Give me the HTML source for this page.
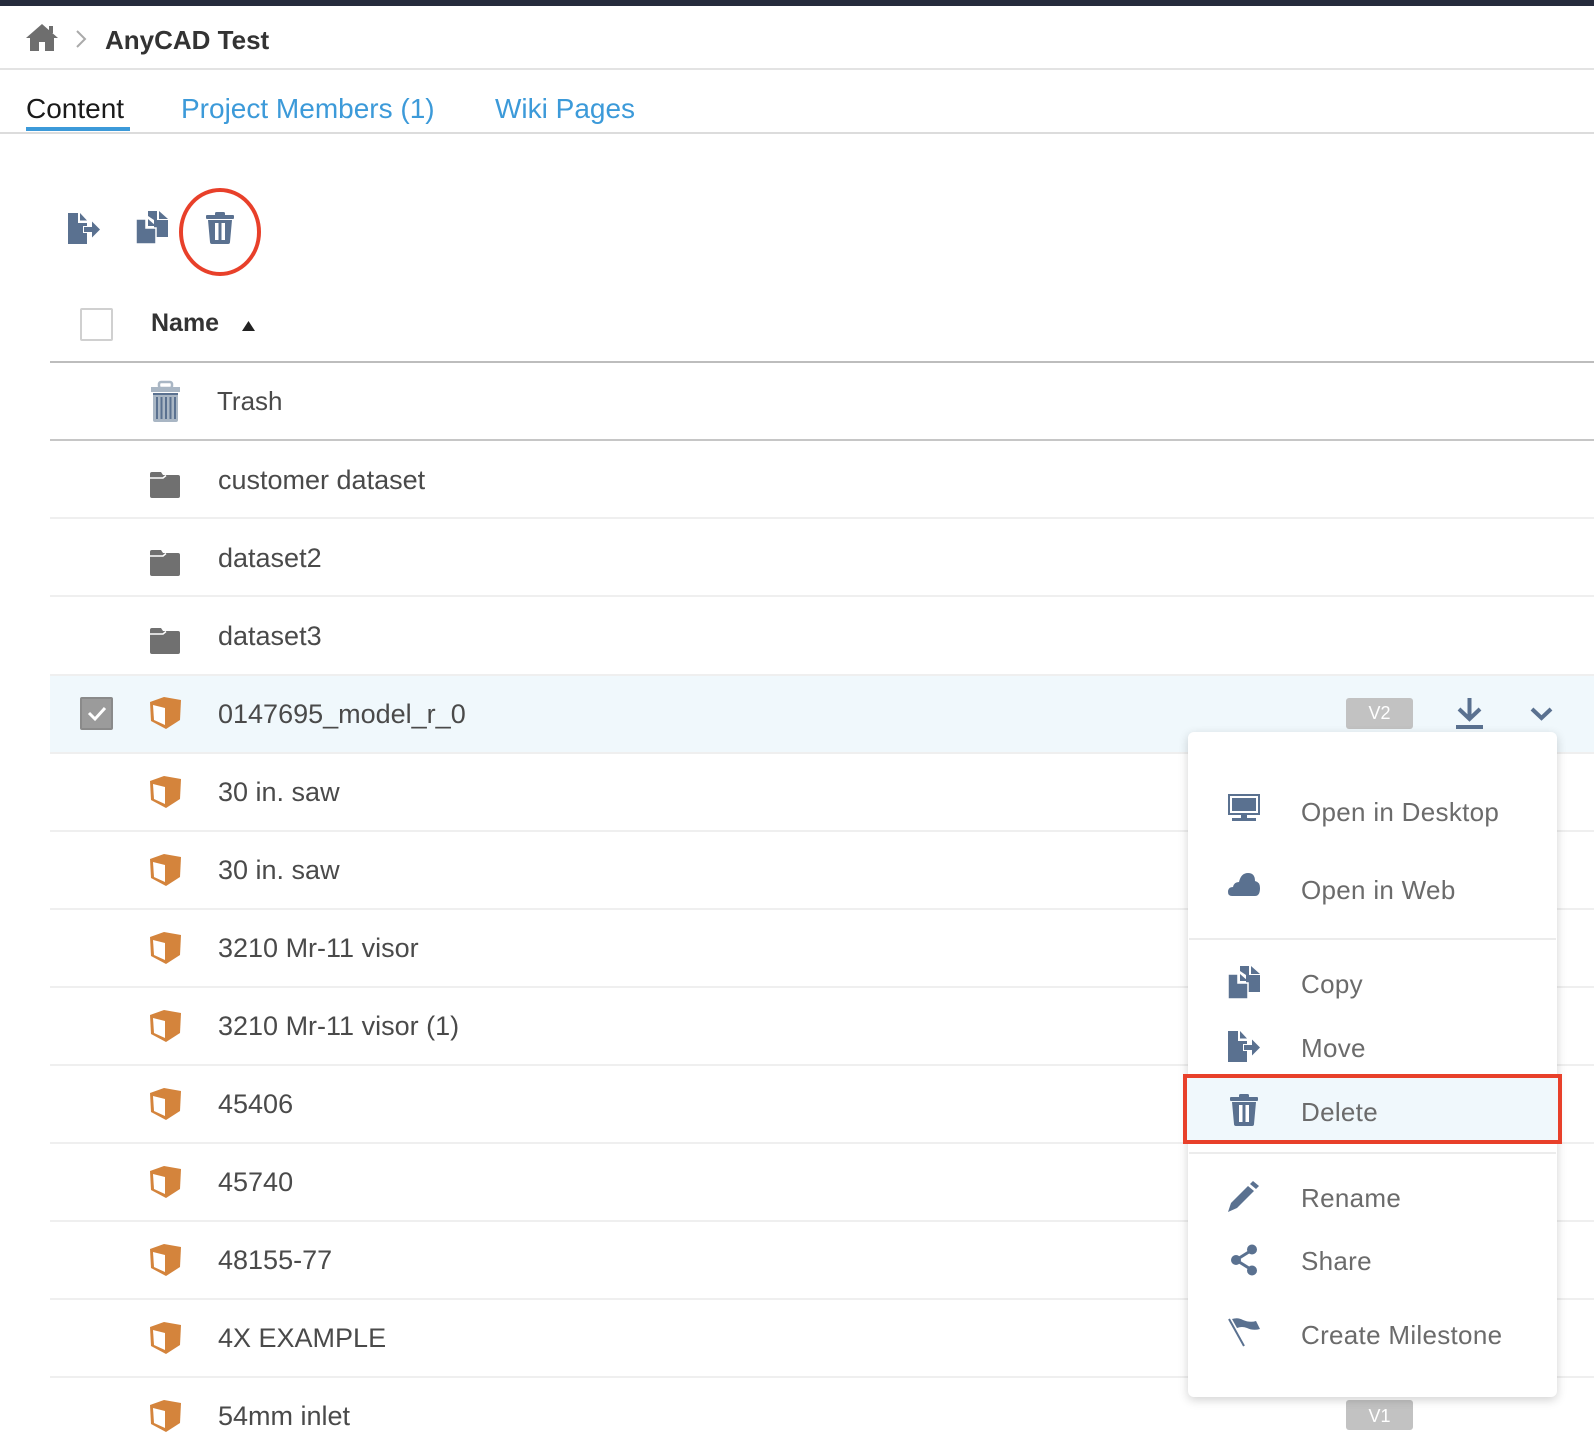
<!DOCTYPE html>
<html><head><meta charset="utf-8">
<style>
*{margin:0;padding:0;box-sizing:border-box}
body{width:1594px;height:1430px;overflow:hidden;background:#fff;position:relative;font-family:"Liberation Sans",sans-serif;color:#4a4a4a}
.a{position:absolute}
.t{position:absolute;white-space:nowrap;line-height:1}
.hl{position:absolute;left:50px;right:0;height:2px;background:#efefef}
.row{position:absolute;left:218px;font-size:27px;color:#4a4a4a;white-space:nowrap;line-height:1}
.mi{position:absolute;left:1301px;font-size:26px;color:#6b6b6b;white-space:nowrap;line-height:1;letter-spacing:0.3px}
svg.a{overflow:visible}
</style></head><body>
<svg width="0" height="0" style="position:absolute">
<defs>
<symbol id="cube" viewBox="0 0 32 32"><polygon points="0,5 14,0 31,3 30,23 16,32 1,24" fill="#d4843c"/><polygon points="3,8 15,11 15,28 4,23" fill="#fff"/></symbol>
<symbol id="folder" viewBox="0 0 30 26"><path d="M0 2 Q0 0 2 0 H11 L13 3 H28 Q30 3 30 5 V24 Q30 26 28 26 H2 Q0 26 0 24 Z" fill="#707070"/><path d="M0 6 H13 L16 3.5" stroke="#fff" stroke-width="1.5" fill="none"/></symbol>
<symbol id="move" viewBox="0 0 32 32"><path d="M0 0 H10 V10 H19 V13 H15 V20 H19 V31 H0 Z" fill="#5a7190"/><path d="M12 0 L19 7.5 H12 Z" fill="#5a7190"/><rect x="16" y="14" width="10" height="5" fill="#5a7190"/><polygon points="24,8.5 32,16.5 24,24.5" fill="#5a7190"/></symbol>
<symbol id="copy" viewBox="0 0 32 33"><path d="M12 0 H21 V9 H32 V26 H18 V9 L12 5 Z" fill="#5a7190"/><path d="M23 0 L32 8 H23 Z" fill="#5a7190"/><path d="M0 8 H10 V17 H20 V33 H0 Z" fill="#5a7190" stroke="#fff" stroke-width="1.5"/><path d="M12 8 L20 15 H12 Z" fill="#5a7190"/></symbol>
<symbol id="trash" viewBox="0 0 28 32"><rect x="9" y="0" width="10" height="4" rx="1.5" fill="#5a7190"/><rect x="0" y="3" width="28" height="4" rx="1" fill="#5a7190"/><path d="M2 8 H26 L24 30 Q24 32 22 32 H6 Q4 32 4 30 Z" fill="#5a7190"/><rect x="9" y="11" width="3.5" height="17" fill="#fff"/><rect x="15.5" y="11" width="3.5" height="17" fill="#fff"/></symbol>
</defs></svg>

<div class="a" style="left:0;top:0;width:1594px;height:6px;background:#262b3c"></div>
<svg class="a" style="left:26px;top:24px" width="32" height="27" viewBox="0 0 32 27"><path d="M16 0 L32 14 H28 V27 H19 V18 H13 V27 H4 V14 H0 Z" fill="#6e6e6e"/><rect x="23" y="2" width="4" height="7" fill="#6e6e6e"/></svg>
<svg class="a" style="left:75px;top:29px" width="12" height="20" viewBox="0 0 12 20"><path d="M2 2 L10 10 L2 18" stroke="#aaa" stroke-width="2" fill="none"/></svg>
<div class="t" style="left:105px;top:27px;font-size:26px;font-weight:bold;color:#333">AnyCAD Test</div>
<div class="a" style="left:0;top:68px;width:1594px;height:2px;background:#e3e3e3"></div>

<div class="t" style="left:26px;top:95px;font-size:28px;color:#1a1a1a">Content</div>
<div class="t" style="left:181px;top:95px;font-size:28px;color:#3c9ad9">Project Members (1)</div>
<div class="t" style="left:495px;top:95px;font-size:28px;color:#3c9ad9">Wiki Pages</div>
<div class="a" style="left:26px;top:127px;width:104px;height:4px;background:#3c9ad9"></div>
<div class="a" style="left:0;top:132px;width:1594px;height:2px;background:#dcdcdc"></div>

<svg class="a" style="left:68px;top:213px" width="32" height="32"><use href="#move"/></svg>
<svg class="a" style="left:136px;top:211px" width="32" height="33"><use href="#copy"/></svg>
<svg class="a" style="left:206px;top:212px" width="28" height="32"><use href="#trash"/></svg>
<svg class="a" style="left:176px;top:186px" width="90" height="94"><ellipse cx="44" cy="46" rx="39" ry="42" fill="none" stroke="#e8402a" stroke-width="4"/></svg>

<div class="a" style="left:80px;top:308px;width:33px;height:33px;border:2px solid #d0d0d0;border-radius:2px"></div>
<div class="t" style="left:151px;top:311px;font-size:25px;font-weight:bold;color:#333">Name</div>
<svg class="a" style="left:242px;top:321px" width="13" height="10"><polygon points="6.5,0 13,10 0,10" fill="#222"/></svg>
<div class="a" style="left:50px;top:361px;right:0;height:2px;background:#bdbdbd"></div>

<svg class="a" style="left:151px;top:382px" width="29" height="40" viewBox="0 0 29 40"><rect x="8" y="0" width="13" height="6" rx="2" fill="none" stroke="#a9b6c4" stroke-width="2.5"/><rect x="0" y="5" width="29" height="5" fill="#a9b6c4"/><rect x="2" y="11" width="25" height="29" rx="2" fill="#a9b6c4"/><rect x="2" y="11" width="25" height="2" fill="#5a7190"/><g fill="#5a7190"><rect x="5" y="15" width="2" height="22"/><rect x="9.5" y="15" width="2" height="22"/><rect x="14" y="15" width="2" height="22"/><rect x="18.5" y="15" width="2" height="22"/><rect x="23" y="15" width="2" height="22"/></g></svg>
<div class="row" style="left:217px;top:388px;font-size:26px">Trash</div>
<div class="a" style="left:50px;top:439px;right:0;height:2px;background:#c6c6c6"></div>

<div class="a" style="left:50px;top:676px;right:0;height:77px;background:#f0f8fc"></div>

<div class="hl" style="top:517px"></div>
<div class="hl" style="top:595px"></div>
<div class="hl" style="top:674px"></div>
<div class="hl" style="top:752px"></div>
<div class="hl" style="top:830px"></div>
<div class="hl" style="top:908px"></div>
<div class="hl" style="top:986px"></div>
<div class="hl" style="top:1064px"></div>
<div class="hl" style="top:1142px"></div>
<div class="hl" style="top:1220px"></div>
<div class="hl" style="top:1298px"></div>
<div class="hl" style="top:1376px"></div>

<svg class="a" style="left:150px;top:472px" width="30" height="26"><use href="#folder"/></svg>
<div class="row" style="top:467px">customer dataset</div>
<svg class="a" style="left:150px;top:550px" width="30" height="26"><use href="#folder"/></svg>
<div class="row" style="top:545px">dataset2</div>
<svg class="a" style="left:150px;top:628px" width="30" height="26"><use href="#folder"/></svg>
<div class="row" style="top:623px">dataset3</div>

<div class="a" style="left:80px;top:697px;width:33px;height:33px;background:#9b9b9b;border:2px solid #8a8a8a;border-radius:2px"></div>
<svg class="a" style="left:86px;top:703px" width="22" height="20"><path d="M3 10 L9 16 L19 5" stroke="#fff" stroke-width="3" fill="none"/></svg>

<svg class="a" style="left:150px;top:697px" width="32" height="32"><use href="#cube"/></svg>
<div class="row" style="top:701px">0147695_model_r_0</div>
<svg class="a" style="left:150px;top:776px" width="32" height="32"><use href="#cube"/></svg>
<div class="row" style="top:779px">30 in. saw</div>
<svg class="a" style="left:150px;top:854px" width="32" height="32"><use href="#cube"/></svg>
<div class="row" style="top:857px">30 in. saw</div>
<svg class="a" style="left:150px;top:932px" width="32" height="32"><use href="#cube"/></svg>
<div class="row" style="top:935px">3210 Mr-11 visor</div>
<svg class="a" style="left:150px;top:1010px" width="32" height="32"><use href="#cube"/></svg>
<div class="row" style="top:1013px">3210 Mr-11 visor (1)</div>
<svg class="a" style="left:150px;top:1088px" width="32" height="32"><use href="#cube"/></svg>
<div class="row" style="top:1091px">45406</div>
<svg class="a" style="left:150px;top:1166px" width="32" height="32"><use href="#cube"/></svg>
<div class="row" style="top:1169px">45740</div>
<svg class="a" style="left:150px;top:1244px" width="32" height="32"><use href="#cube"/></svg>
<div class="row" style="top:1247px">48155-77</div>
<svg class="a" style="left:150px;top:1322px" width="32" height="32"><use href="#cube"/></svg>
<div class="row" style="top:1325px">4X EXAMPLE</div>
<svg class="a" style="left:150px;top:1400px" width="32" height="32"><use href="#cube"/></svg>
<div class="row" style="top:1403px">54mm inlet</div>

<div class="a" style="left:1346px;top:698px;width:67px;height:31px;background:#c2c2c2;border-radius:3px;color:#fff;font-size:18px;text-align:center;line-height:31px">V2</div>
<svg class="a" style="left:1456px;top:698px" width="27" height="32" viewBox="0 0 27 32"><rect x="11.5" y="0" width="4" height="20" fill="#5a7190"/><path d="M3 11 L13.5 21 L24 11" stroke="#5a7190" stroke-width="4" fill="none"/><rect x="0" y="27" width="27" height="4" fill="#5a7190"/></svg>
<svg class="a" style="left:1530px;top:706px" width="23" height="15" viewBox="0 0 23 15"><path d="M2 3 L11.5 12 L21 3" stroke="#5a7190" stroke-width="4" fill="none"/></svg>
<div class="a" style="left:1346px;top:1400px;width:67px;height:30px;background:#c2c2c2;border-radius:3px;color:#fff;font-size:18px;text-align:center;line-height:32px">V1</div>

<div class="a" style="left:1188px;top:732px;width:369px;height:665px;background:#fff;border-radius:6px;box-shadow:0 3px 10px rgba(0,0,0,0.18)"></div>
<svg class="a" style="left:1228px;top:794px" width="32" height="28" viewBox="0 0 32 28"><rect x="1" y="1" width="30" height="19" fill="none" stroke="#5a7190" stroke-width="2"/><rect x="4" y="4" width="24" height="13" fill="#5a7190"/><rect x="13" y="20" width="6" height="4" fill="#5a7190"/><rect x="4" y="24" width="24" height="3" fill="#5a7190"/></svg>
<div class="mi" style="top:799px">Open in Desktop</div>
<svg class="a" style="left:1228px;top:873px" width="32" height="23" viewBox="0 0 32 23"><path d="M4 23 Q0 23 0 19 Q0 14 5 14 Q6 9 11 9 Q13 0 20 0 Q27 0 27 8 Q32 9 32 15 Q32 23 27 23 Z" fill="#5a7190"/></svg>
<div class="mi" style="top:877px">Open in Web</div>
<div class="a" style="left:1189px;top:938px;width:367px;height:2px;background:#ececec"></div>
<svg class="a" style="left:1228px;top:966px" width="32" height="33"><use href="#copy"/></svg>
<div class="mi" style="top:971px">Copy</div>
<svg class="a" style="left:1228px;top:1031px" width="32" height="32"><use href="#move"/></svg>
<div class="mi" style="top:1035px">Move</div>
<div class="a" style="left:1183px;top:1074px;width:379px;height:70px;background:#f0f8fc;border:4px solid #e8402a"></div>
<svg class="a" style="left:1230px;top:1094px" width="28" height="32"><use href="#trash"/></svg>
<div class="mi" style="top:1099px">Delete</div>
<div class="a" style="left:1189px;top:1152px;width:367px;height:2px;background:#ececec"></div>
<svg class="a" style="left:1228px;top:1180px" width="32" height="32" viewBox="0 0 32 32"><path d="M25 1 L31 6 L28 9 L22 4 Z" fill="#5a7190"/><path d="M20 6 L26 11 L9 28 L0 32 L3 23 Z" fill="#5a7190"/></svg>
<div class="mi" style="top:1185px">Rename</div>
<svg class="a" style="left:1230px;top:1244px" width="28" height="32" viewBox="0 0 28 32"><path d="M6 16 L22 6 M6 16 L22 26" stroke="#5a7190" stroke-width="3"/><circle cx="6" cy="16" r="5" fill="#5a7190"/><circle cx="22" cy="5.5" r="5" fill="#5a7190"/><circle cx="22" cy="26.5" r="5" fill="#5a7190"/></svg>
<div class="mi" style="top:1248px">Share</div>
<svg class="a" style="left:1228px;top:1318px" width="32" height="30" viewBox="0 0 32 30"><path d="M1 1 L16 28" stroke="#5a7190" stroke-width="2"/><path d="M4 1 Q10 -1 15 2 Q22 5 28 3 L32 11 Q25 13 19 10 Q14 8 9 10 Z" fill="#5a7190"/></svg>
<div class="mi" style="top:1322px">Create Milestone</div>
</body></html>
